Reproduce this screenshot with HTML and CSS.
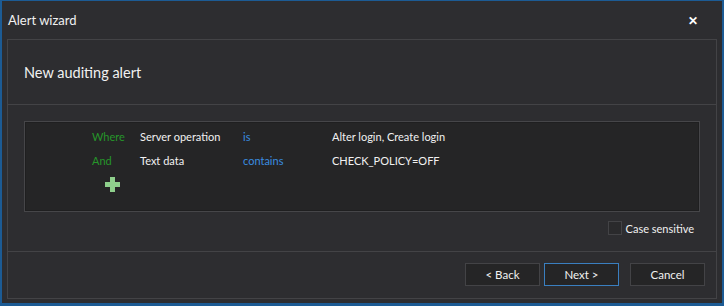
FILE: index.html
```html
<!DOCTYPE html>
<html lang="en">
<head>
  <meta charset="UTF-8"/>
  <title>Alert wizard</title>
  <link rel="stylesheet" href="styles.css">
</head>
<body>
  <div class="window">
    <div class="titlebar">
      <span class="title">Alert wizard</span>
      <span class="close">&#x2715;</span>
    </div>
    <div class="panel">
      <div class="header">New auditing alert</div>
      <div class="middle">
        <div class="filters">
          <div class="frow">
            <span class="kw">Where</span>
            <span class="field">Server operation</span>
            <span class="op">is</span>
            <span class="val">Alter login, Create login</span>
          </div>
          <div class="frow">
            <span class="kw">And</span>
            <span class="field">Text data</span>
            <span class="op">contains</span>
            <span class="val">CHECK_POLICY=OFF</span>
          </div>
          <div class="frow">
            <span class="kw">
              <svg class="plus" width="15" height="15" viewBox="0 0 15 15"><path d="M5 0h5v5h5v5h-5v5H5v-5H0V5h5z" fill="#8fd08c"/></svg>
            </span>
          </div>
        </div>
        <label class="check"><span class="box"></span>Case sensitive</label>
      </div>
      <div class="footer">
        <button class="btn">&lt; Back</button>
        <button class="btn primary">Next &gt;</button>
        <button class="btn cancel">Cancel</button>
      </div>
    </div>
  </div>
</body>
</html>
```

FILE: styles.css
```css
html, body { margin:0; padding:0; }
body { width:724px; height:306px; background:#2d2d30; font-family:Lato,'Noto Sans',Arial,sans-serif; color:#f1f1f1; overflow:hidden; }
.window { box-sizing:border-box; width:724px; height:306px; background:#2d2d30; border:1px solid #1c5b94; border-left-width:2px; border-right-width:2px; border-bottom-width:3px; display:flex; flex-direction:column; }
.titlebar { height:38px; display:flex; align-items:center; justify-content:space-between; padding:0 24px 0 6px; }
.title { font-size:13px; color:#f1f1f1; }
.close { font-size:12px; font-weight:bold; color:#fff; }
.panel { margin:0 5px 4px 5px; border:1px solid #434346; flex:1; display:flex; flex-direction:column; }
.header { height:65px; border-bottom:1px solid #434346; box-sizing:border-box; padding:24px 0 0 16px; font-size:14.5px; }
.middle { height:147px; border-bottom:1px solid #434346; box-sizing:border-box; padding:16px 16px 0 16px; display:flex; flex-direction:column; }
.filters { height:91px; box-sizing:border-box; background:#252526; border:1px solid #464649; box-shadow:inset 0 0 0 1px #1f1f20; padding:2px 0 0 67px; font-size:11px; }
.frow { display:flex; height:24px; align-items:center; }
.kw { width:48px; color:#26962a; }
.field { width:103px; color:#f1f1f1; }
.op { width:89px; color:#3a8de0; }
.val { color:#f1f1f1; }
.plus { display:block; margin-left:13px; }
.check { align-self:flex-end; display:flex; align-items:center; margin-top:9px; margin-right:6px; font-size:11px; gap:4px; }
.box { width:12px; height:12px; border:1px solid #434346; background:#2a2a2c; }
.footer { flex:1; display:flex; justify-content:flex-end; align-items:flex-start; padding:11px 11px 0 0; gap:4px; }
.btn { width:75px; height:23px; box-sizing:border-box; background:#252526; border:1px solid #434346; color:#f1f1f1; font-family:inherit; font-size:11.5px; padding:0; }
.btn.primary { border-color:#3a7fc0; }
.btn.cancel { margin-left:7px; }
```
